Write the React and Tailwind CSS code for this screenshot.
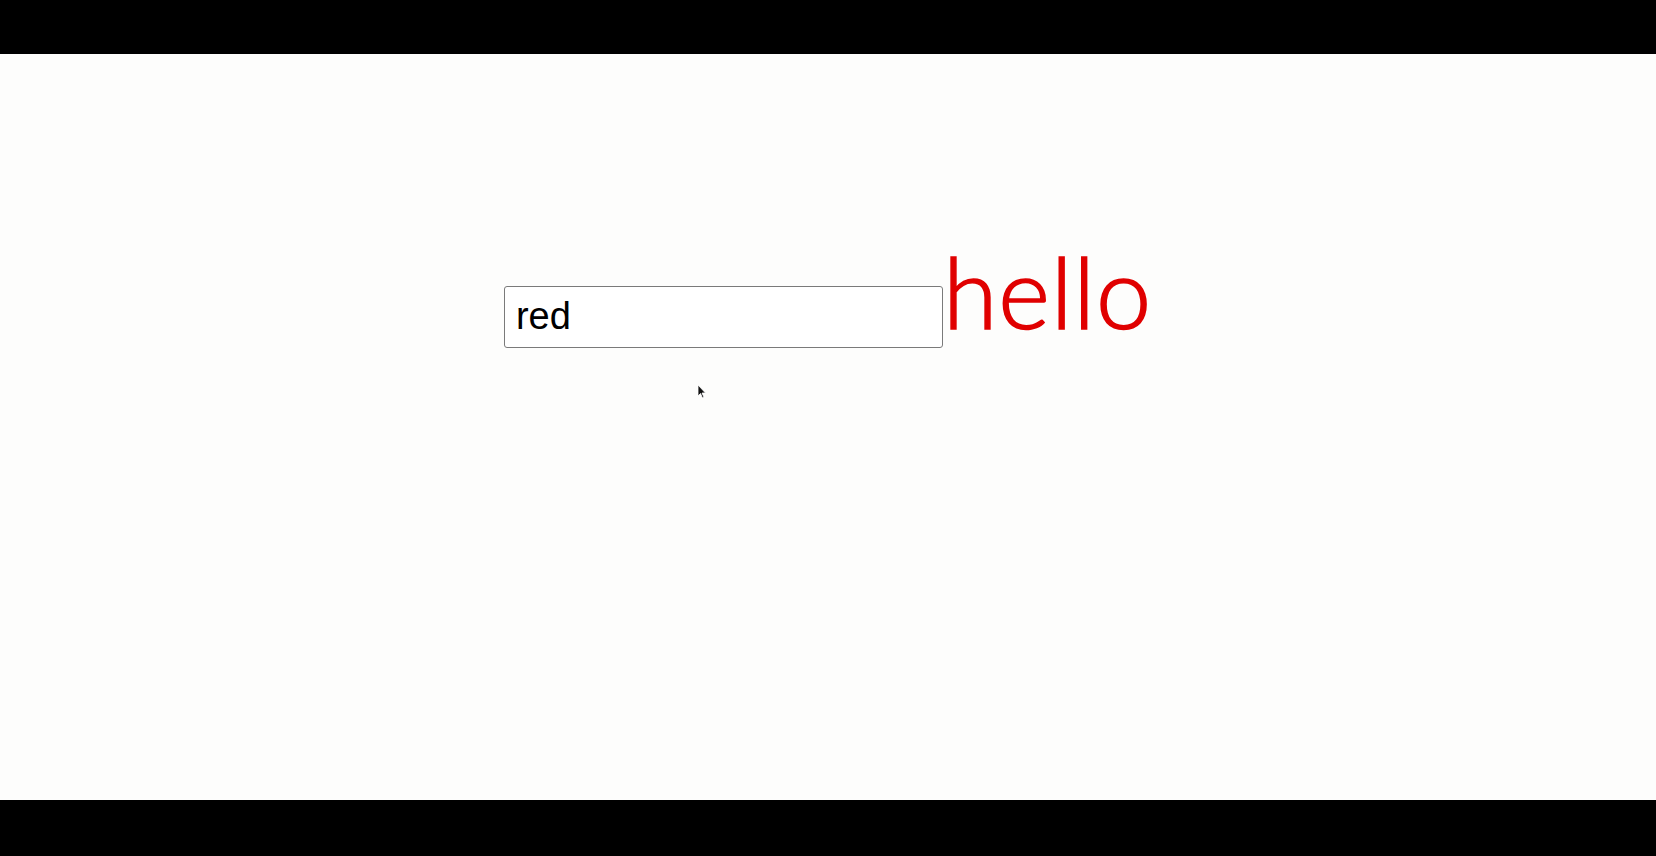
import React, { useState } from "react";

const App = () => {
  const [color, setColor] = useState("red");

  return (
    <div className="relative flex flex-col w-full h-[856px] bg-black">
      <div className="h-[54px] bg-black" />
      <main className="flex-1 bg-[#fdfdfc] pt-[187px]">
        <div className="flex items-baseline justify-center">
          <input
            value={color}
            onChange={(e) => setColor(e.target.value)}
            type="text"
            className="w-[439px] h-[62px] px-[11px] border border-[#7a7a7a] rounded-[3px] bg-white text-black text-[38px] focus:outline-none"
            style={{ fontFamily: '"Liberation Sans", Arial, sans-serif' }}
          />
          <span
            className="text-[99px] leading-none text-[#e00000] font-light tracking-[0.8px] [-webkit-text-stroke:1.6px_#e00000]"
            style={{ fontFamily: "Lato, sans-serif" }}
          >
            hello
          </span>
        </div>
      </main>
      <div className="h-[56px] bg-black" />

      {/* mouse pointer captured in the screenshot */}
      <svg
        className="absolute left-[697px] top-[384px]"
        width="10"
        height="15"
        viewBox="0 0 10 15"
      >
        <path d="M1 1 L1 12 L3.5 9.5 L5.5 14 L7 13.3 L5 9 L8.5 9 Z" fill="#111" stroke="#fff" strokeWidth="0.8" />
      </svg>
    </div>
  );
};

export default App;
